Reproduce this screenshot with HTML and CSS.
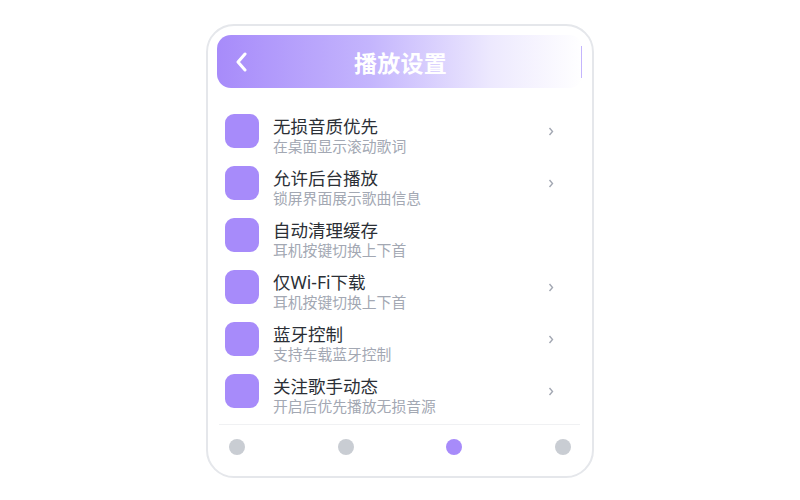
FILE: index.html
```html
<!DOCTYPE html>
<html lang="zh-CN">
<head>
  <meta charset="UTF-8">
  <meta name="viewport" content="width=device-width, initial-scale=1.0">
  <title>播放设置</title>
  <link rel="stylesheet" href="styles.css">
</head>
<body>
  <div class="phone">
    <!-- 顶部标题栏 -->
    <div class="header">
      <div class="back">
        <svg width="14" height="20" viewBox="0 0 14 20"><polyline points="10,2 3,10 10,18" fill="none" stroke="#fff" stroke-width="3" stroke-linecap="round" stroke-linejoin="round"/></svg>
      </div>
      <h1>播放设置</h1>
      <div class="edge"><span></span></div>
    </div>

    <!-- 设置列表 -->
    <div class="list">
      <div class="row">
        <div class="icon"></div>
        <div class="text">
          <div class="title">无损音质优先</div>
          <div class="sub">在桌面显示滚动歌词</div>
        </div>
        <svg class="arrow" width="6" height="9" viewBox="0 0 6 9"><polyline points="1.5,1 4.5,4.5 1.5,8" fill="none" stroke="#a3a8b3" stroke-width="1.4"/></svg>
      </div>
      <div class="row">
        <div class="icon"></div>
        <div class="text">
          <div class="title">允许后台播放</div>
          <div class="sub">锁屏界面展示歌曲信息</div>
        </div>
        <svg class="arrow" width="6" height="9" viewBox="0 0 6 9"><polyline points="1.5,1 4.5,4.5 1.5,8" fill="none" stroke="#a3a8b3" stroke-width="1.4"/></svg>
      </div>
      <div class="row">
        <div class="icon"></div>
        <div class="text">
          <div class="title">自动清理缓存</div>
          <div class="sub">耳机按键切换上下首</div>
        </div>
      </div>
      <div class="row">
        <div class="icon"></div>
        <div class="text">
          <div class="title">仅Wi-Fi下载</div>
          <div class="sub">耳机按键切换上下首</div>
        </div>
        <svg class="arrow" width="6" height="9" viewBox="0 0 6 9"><polyline points="1.5,1 4.5,4.5 1.5,8" fill="none" stroke="#a3a8b3" stroke-width="1.4"/></svg>
      </div>
      <div class="row">
        <div class="icon"></div>
        <div class="text">
          <div class="title">蓝牙控制</div>
          <div class="sub">支持车载蓝牙控制</div>
        </div>
        <svg class="arrow" width="6" height="9" viewBox="0 0 6 9"><polyline points="1.5,1 4.5,4.5 1.5,8" fill="none" stroke="#a3a8b3" stroke-width="1.4"/></svg>
      </div>
      <div class="row">
        <div class="icon"></div>
        <div class="text">
          <div class="title">关注歌手动态</div>
          <div class="sub">开启后优先播放无损音源</div>
        </div>
        <svg class="arrow" width="6" height="9" viewBox="0 0 6 9"><polyline points="1.5,1 4.5,4.5 1.5,8" fill="none" stroke="#a3a8b3" stroke-width="1.4"/></svg>
      </div>
    </div>

    <!-- 底部导航 -->
    <div class="tabs">
      <span class="dot"></span>
      <span class="dot"></span>
      <span class="dot active"></span>
      <span class="dot"></span>
    </div>
  </div>
</body>
</html>
```

FILE: styles.css
```css
body {
  margin: 0;
  background-color: #fff;
  font-family: "Noto Sans", "Noto Sans CJK SC", sans-serif;
}
.phone {
  width: 388px;
  height: 454px;
  margin: 24px auto 0;
  border: 2px solid #e5e7eb;
  border-radius: 28px;
  padding: 9px 9px 0;
  box-sizing: border-box;
  display: flex;
  flex-direction: column;
}
.header {
  height: 53px;
  border-radius: 14px;
  background: linear-gradient(90deg, #a78bfa 0%, #c4b5fd 42%, #ede9fe 75%, #ffffff 100%);
  display: grid;
  grid-template-columns: 1fr auto 1fr;
  align-items: center;
}
.back {
  padding-left: 18px;
  display: flex;
  align-items: center;
}
.header h1 {
  margin: 0 0 0 1px;
  font-size: 23px;
  font-weight: 700;
  color: #fff;
  letter-spacing: 0.3px;
}
.edge {
  display: flex;
  justify-content: flex-end;
}
.edge span {
  width: 1px;
  height: 32px;
  background-color: #c4b5fd;
  margin-right: 1px;
}
.list {
  margin: 17px 3px 0 2px;
  border-bottom: 1px solid #f0f1f3;
  padding-bottom: 7px;
}
.row {
  height: 52px;
  display: flex;
  align-items: flex-start;
  padding: 9px 26px 0 6px;
  box-sizing: border-box;
}
.icon {
  width: 34px;
  height: 34px;
  border-radius: 9px;
  background-color: #a78bfa;
  flex-shrink: 0;
}
.text {
  flex: 1;
  margin-left: 14px;
  margin-top: 1px;
}
.title {
  font-size: 17.5px;
  line-height: 22px;
  color: #2b2f36;
}
.sub {
  font-size: 14.8px;
  line-height: 18px;
  color: #a3a8b3;
}
.arrow {
  margin-top: 13px;
}
.tabs {
  display: flex;
  justify-content: space-between;
  padding: 14px 9px 0 10px;
  margin: 0 3px 0 2px;
}
.dot {
  width: 16px;
  height: 16px;
  border-radius: 50%;
  background-color: #c9cdd3;
}
.dot.active {
  background-color: #a78bfa;
}
```
